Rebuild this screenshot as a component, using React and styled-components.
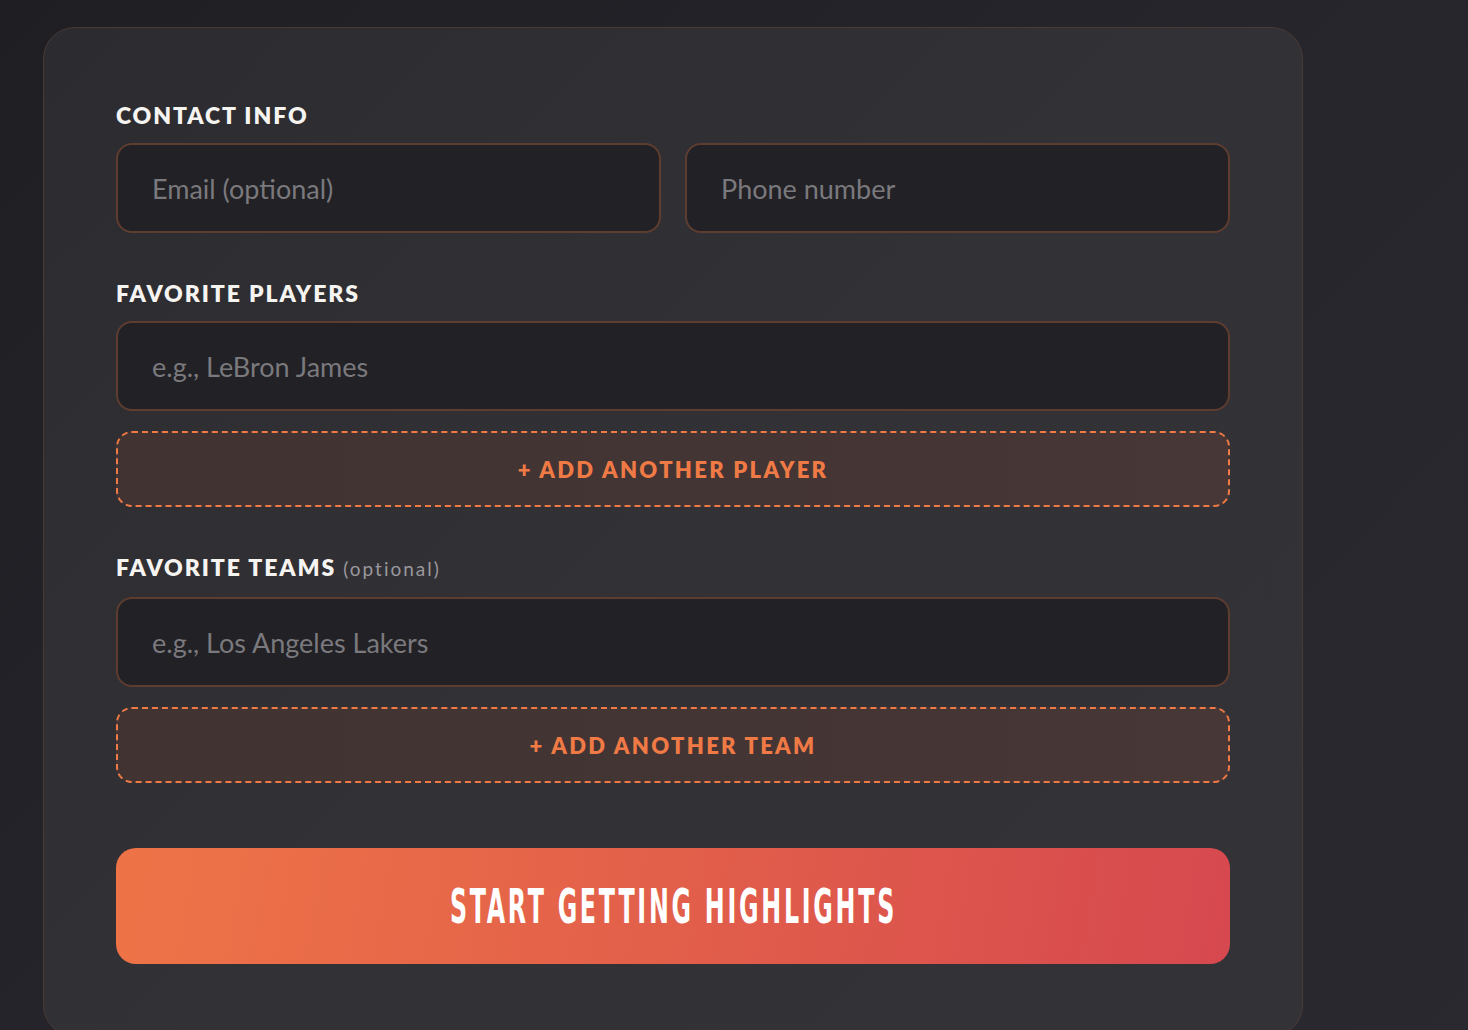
import React, { useState } from 'react';
import styled, { createGlobalStyle } from 'styled-components';

const GlobalStyle = createGlobalStyle`
  html, body {
    margin: 0;
    padding: 0;
    overflow: hidden;
  }
  body {
    background: linear-gradient(135deg, #1f1e23 0%, #26252b 50%, #2a292f 100%);
    min-height: 100vh;
    font-family: Lato, "Open Sans", sans-serif;
  }
`;

function App() {
  const [players, setPlayers] = useState(['']);
  const [teams, setTeams] = useState(['']);

  return (
    <Page>
      <GlobalStyle />
      <Card>
        <Section>
          <Label>Contact Info</Label>
          <Row>
            <Input placeholder="Email (optional)" />
            <Input placeholder="Phone number" />
          </Row>
        </Section>

        <Section>
          <Label>Favorite Players</Label>
          <Stack>
            {players.map((p, i) => (
              <Input key={i} placeholder="e.g., LeBron James" />
            ))}
            <AddButton onClick={() => setPlayers([...players, ''])}>+ Add Another Player</AddButton>
          </Stack>
        </Section>

        <Section>
          <Label>
            Favorite Teams <Optional>(optional)</Optional>
          </Label>
          <Stack>
            {teams.map((t, i) => (
              <Input key={i} placeholder="e.g., Los Angeles Lakers" />
            ))}
            <AddButton onClick={() => setTeams([...teams, ''])}>+ Add Another Team</AddButton>
          </Stack>
        </Section>

        <Submit>
          <SubmitText>Start Getting Highlights</SubmitText>
        </Submit>
      </Card>
    </Page>
  );
}

const Page = styled.div`
  padding: 27px 0 0 43px;
`;

const Card = styled.div`
  width: 1260px;
  box-sizing: border-box;
  padding: 73px 72px 72px 72px;
  border: 1px solid #4a3a35;
  border-radius: 32px;
  background: linear-gradient(135deg, #2c2b30 0%, #323136 50%, #333237 100%);
`;

const Section = styled.div`
  margin-bottom: 46px;
`;

const Label = styled.div`
  font-family: Lato, sans-serif;
  font-size: 23px;
  line-height: 28px;
  font-weight: 800;
  letter-spacing: 1.9px;
  text-transform: uppercase;
  color: #f6f4f0;
  margin-bottom: 14px;
`;

const Optional = styled.span`
  font-size: 19px;
  font-weight: 400;
  letter-spacing: 2px;
  text-transform: none;
  color: #9a989c;
`;

const Row = styled.div`
  display: grid;
  grid-template-columns: 1fr 1fr;
  gap: 24px;
`;

const Stack = styled.div`
  display: flex;
  flex-direction: column;
  gap: 20px;
`;

const Input = styled.input`
  box-sizing: border-box;
  width: 100%;
  height: 90px;
  padding: 0 34px;
  border: 2px solid #5e3d30;
  border-radius: 16px;
  background: #222125;
  color: #e8e6e3;
  font-family: Lato, sans-serif;
  font-size: 27px;
  outline: none;

  &::placeholder {
    color: #7a797d;
  }
`;

const AddButton = styled.button`
  box-sizing: border-box;
  width: 100%;
  height: 76px;
  border: 2px dashed #f07a45;
  border-radius: 16px;
  background: linear-gradient(90deg, #413332 0%, #433534 50%, #473736 100%);
  color: #f07a45;
  font-family: Lato, sans-serif;
  font-size: 22px;
  font-weight: 800;
  letter-spacing: 2.3px;
  text-transform: uppercase;
  cursor: pointer;
`;

const Submit = styled.button`
  box-sizing: border-box;
  width: 100%;
  height: 116px;
  margin-top: 65px;
  border: none;
  border-radius: 20px;
  background: linear-gradient(100deg, #ee7447 0%, #e25f4a 50%, #d6484f 100%);
  color: #ffffff;
  cursor: pointer;
  display: flex;
  align-items: center;
  justify-content: center;
`;

const SubmitText = styled.span`
  display: inline-block;
  font-family: "DejaVu Sans", sans-serif;
  font-stretch: condensed;
  font-size: 48px;
  font-weight: 700;
  letter-spacing: 5px;
  text-transform: uppercase;
  transform: scaleX(0.55);
`;

export default App;
